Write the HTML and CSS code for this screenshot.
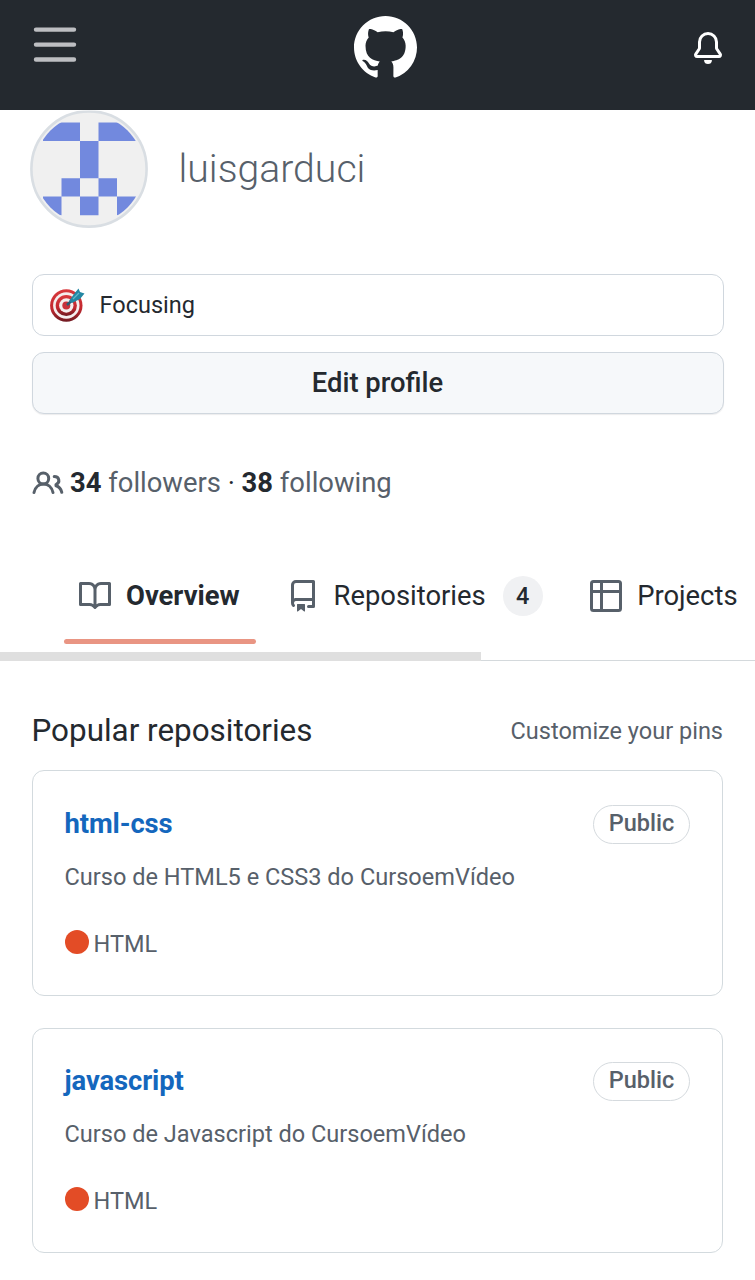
FILE: index.html
```
<!DOCTYPE html>
<html lang="en">
<head>
<meta charset="utf-8">
<title>luisgarduci</title>
<link rel="stylesheet" href="styles.css">
</head>
<body>
<header class="topbar">
  <svg class="menu" viewBox="0 0 42 36"><path d="M2 2.6H40M2 17.6H40M2 32.5H40"/></svg>
  <svg class="mark" viewBox="0 0 16 16"><path d="M8 0C3.58 0 0 3.58 0 8c0 3.54 2.29 6.53 5.47 7.59.4.07.55-.17.55-.38 0-.19-.01-.82-.01-1.49-2.01.37-2.53-.49-2.69-.94-.09-.23-.48-.94-.82-1.13-.28-.15-.68-.52-.01-.53.63-.01 1.08.58 1.23.82.72 1.21 1.87.87 2.33.66.07-.52.28-.87.51-1.07-1.78-.2-3.64-.89-3.64-3.95 0-.87.31-1.59.82-2.15-.08-.2-.36-1.02.08-2.12 0 0 .67-.21 2.2.82.64-.18 1.32-.27 2-.27.68 0 1.36.09 2 .27 1.53-1.04 2.2-.82 2.2-.82.44 1.1.16 1.92.08 2.12.51.56.82 1.27.82 2.15 0 3.07-1.87 3.75-3.65 3.95.29.25.54.73.54 1.48 0 1.07-.01 1.93-.01 2.2 0 .21.15.46.55.38A8.013 8.013 0 0016 8c0-4.42-3.58-8-8-8z"/></svg>
  <svg class="bell" viewBox="0 0 16 16"><path d="M8 16a2 2 0 001.985-1.75c.017-.137-.097-.25-.235-.25h-3.5c-.138 0-.252.113-.235.25A2 2 0 008 16z"/><path fill-rule="evenodd" d="M3 5a5 5 0 0110 0v2.947c0 .05.015.098.042.139l1.703 2.555A1.518 1.518 0 0113.482 13H2.518a1.518 1.518 0 01-1.263-2.36l1.703-2.554A.25.25 0 003 7.947V5zm5-3.5A3.5 3.5 0 004.5 5v2.947c0 .346-.102.683-.294.97l-1.703 2.556a.018.018 0 00-.003.01l.001.006c0 .002.002.004.004.006a.017.017 0 00.006.004l.007.001h10.964l.007-.001a.016.016 0 00.006-.004.016.016 0 00.004-.006l.001-.007a.017.017 0 00-.003-.01l-1.703-2.554a1.75 1.75 0 01-.294-.97V5A3.5 3.5 0 008 1.5z"/></svg>
</header>
<main>
  <section class="profile">
    <div class="identity">
      <svg class="avatar" viewBox="0 0 118 118">
        <defs><clipPath id="round"><circle cx="59" cy="59" r="54.500"/></clipPath></defs>
        <circle cx="59" cy="59" r="57.6" fill="#f0f0f0" stroke="#d9dee3" stroke-width="2.6"/>
        <path clip-path="url(#round)" fill="#7289de" d="M13 12.500H50V31H13zM68.500 12.500H106V31H68.500zM50 31H68.500V68.300H50zM31.500 68.300H50V86.600H31.500zM68.500 68.300H87V86.600H68.500zM13 86.600H31.500V105.300H13zM50 86.600H68.500V105.300H50zM87 86.600H106V105.300H87z"/>
      </svg>
      <h1 class="login">luisgarduci</h1>
    </div>
    <div class="status">
      <svg class="target" viewBox="0 0 34 34">
        <defs><linearGradient id="red" x1="0" y1="0" x2="0" y2="1"><stop offset="0" stop-color="#d9393d"/><stop offset=".6" stop-color="#c2282f"/><stop offset="1" stop-color="#701a22"/></linearGradient></defs>
        <circle cx="16.300" cy="17.500" r="16.200" fill="url(#red)"/>
        <circle cx="16.300" cy="17.500" r="13.200" fill="#f5eeee"/>
        <circle cx="16.300" cy="17.500" r="10.600" fill="url(#red)"/>
        <circle cx="16.300" cy="17.500" r="7.200" fill="#f5eeee"/>
        <circle cx="16.300" cy="17.500" r="4" fill="#c9303a"/>
        <path d="M17 17L29 6" stroke="#285b75" stroke-width="2.600"/>
        <path d="M19 13L24 6 28.500 .5 30 4 34.500 5.500 30 11 22 15z" fill="#2487a3"/>
        <path d="M23 11L29 5" stroke="#5db8cc" stroke-width="1.200"/>
      </svg>
      <span>Focusing</span>
    </div>
    <button class="edit">Edit profile</button>
    <p class="follow">
      <svg class="people" viewBox="0 0 32 32"><circle cx="11.300" cy="11.500" r="5.400"/><path d="M2 25.500C4.500 14.200 18.500 14.200 21 25.500M22.200 9.500C27.500 9.500 28.500 15.500 24 17.500V18.800C27.300 19.800 29 22 29.800 25.300"/></svg>
      <span><b>34</b> followers <i>·</i> <b>38</b> following</span>
    </p>
  </section>
  <nav class="tabs">
    <a class="tab active"><svg class="icon" viewBox="0 0 16 16"><path fill-rule="evenodd" d="M0 1.750A.75.75 0 01.75 1h4.253c1.227 0 2.317.59 3 1.501A3.744 3.744 0 0111.006 1h4.245a.75.75 0 01.75.75v10.500a.75.75 0 01-.75.75h-4.507a2.250 2.250 0 00-1.591.659l-.622.621a.75.75 0 01-1.060 0l-.622-.621A2.250 2.250 0 005.258 13H.75a.75.75 0 01-.75-.75V1.750zm8.755 3a2.250 2.250 0 012.250-2.250H14.500v9h-3.757c-.71 0-1.400.201-1.992.572l.004-7.322zm-1.504 7.324l.004-5.073-.002-2.253A2.250 2.250 0 005.003 2.500H1.500v9h3.757a3.750 3.750 0 011.994.574z"/></svg><span>Overview</span></a>
    <a class="tab repos"><svg class="icon" viewBox="0 0 16 16"><path fill-rule="evenodd" d="M2 2.500A2.500 2.500 0 014.500 0h8.750a.75.75 0 01.75.75v12.500a.75.75 0 01-.75.75h-2.500a.75.75 0 110-1.500h1.750v-2h-8a1 1 0 00-.714 1.700.75.75 0 01-1.072 1.050A2.495 2.495 0 012 11.500v-9zm10.500-1V9h-8c-.356 0-.694.074-1 .208V2.500a1 1 0 011-1h8zM5 12.250v3.250a.25.25 0 00.4.2l1.450-1.087a.25.25 0 01.3 0L8.600 15.700a.25.25 0 00.4-.2v-3.250a.25.25 0 00-.25-.25h-3.500a.25.25 0 00-.25.25z"/></svg><span>Repositories</span><span class="count">4</span></a>
    <a class="tab projects"><svg class="icon outline" viewBox="0 0 16 16"><rect x=".75" y=".75" width="14.500" height="14.500" rx="1"/><path d="M.75 5.750H15.250M5.750 .75V15.250"/></svg><span>Projects</span></a>
  </nav>
  <div class="scroll"><div class="thumb"></div></div>
  <section class="popular">
    <div class="heading"><h2>Popular repositories</h2><a>Customize your pins</a></div>
    <article class="card">
      <div class="row"><a class="repo">html-css</a><span class="badge">Public</span></div>
      <p class="desc">Curso de HTML5 e CSS3 do CursoemVídeo</p>
      <p class="lang"><span class="dot"></span><span>HTML</span></p>
    </article>
    <article class="card">
      <div class="row"><a class="repo">javascript</a><span class="badge">Public</span></div>
      <p class="desc">Curso de Javascript do CursoemVídeo</p>
      <p class="lang"><span class="dot"></span><span>HTML</span></p>
    </article>
  </section>
</main>
</body>
</html>
```
FILE: styles.css
```
* { box-sizing: border-box; }
body { margin: 0; background: #fff; color: #24292f; font-family: Roboto, sans-serif; font-size: 27.4px; overflow: hidden; }
h1, h2, p { margin: 0; font-weight: 400; }
svg { display: block; flex: none; overflow: visible; }
span, a { white-space: nowrap; }
.topbar { height: 110px; background: #24292f; display: flex; justify-content: space-between; padding: 0 31px 0 34px; }
.menu { width: 42px; height: 36px; margin-top: 27px; fill: none; stroke: #bdbec2; stroke-width: 4.4; stroke-linecap: round; }
.mark { width: 63px; height: 63px; margin: 16px 0 0 2.500px; fill: #fff; }
.bell { width: 32px; height: 32px; margin-top: 32px; fill: #fff; }
.profile { padding: 0 32px 0 31.500px; }
.identity { display: flex; align-items: center; height: 118px; margin: -.5px 0 46px -1.500px; gap: 30.500px; }
.avatar { width: 118px; height: 118px; clip-path: inset(1px -2px -2px -2px); }
.login { font-size: 39.200px; font-weight: 300; color: #57606a; line-height: 46px; }
.status, .edit { width: 692px; height: 62px; border: 1.500px solid #d0d7de; border-radius: 12px; }
.status { display: flex; align-items: center; padding-left: 17px; gap: 16px; font-size: 23.500px; margin-top: 46px; }
.status span { padding-top: 1px; }
.target { width: 34px; height: 34px; }
.edit { display: block; margin-top: 16px; background: #f6f8fa; font: 500 27.400px Roboto, sans-serif; color: #24292f; padding: 0; box-shadow: 0 1px 1px #1b1f2414; }
.follow { display: flex; align-items: center; height: 40px; margin-top: 49px; color: #57606a; gap: 6.500px; }
.follow b { color: #24292f; font-weight: 700; }
.follow i { color: #24292f; font-style: normal; }
.people { width: 32px; height: 32px; fill: none; stroke: #57606a; stroke-width: 3; stroke-linecap: round; stroke-linejoin: round; }
.icon { width: 32px; height: 32px; fill: #57606a; }
.outline { fill: none; stroke: #57606a; stroke-width: 1.500; }
.tabs { display: flex; height: 83px; margin-top: 58px; padding-left: 63.500px; }
.tab { display: flex; align-items: center; height: 83px; padding: 0 16px 13px 15.500px; gap: 15px; }
.active { width: 192px; font-weight: 700; position: relative; }
.active::after { content: ""; position: absolute; left: 0; right: 0; bottom: 0; height: 5px; border-radius: 3px; background: #e99583; }
.repos { margin-left: 15.500px; }
.count { width: 40px; height: 40px; border-radius: 20px; background: #f0f1f3; font-size: 23.500px; font-weight: 500; line-height: 40px; text-align: center; margin-left: 2px; }
.projects { margin-left: 16px; }
.scroll { height: 17px; border-bottom: 1px solid #d4d9dc; padding-top: 8px; }
.thumb { height: 9px; width: 481px; background: #dfdfdf; }
.popular { padding: 48px 32px 0 31.500px; }
.heading { display: flex; justify-content: space-between; align-items: center; height: 44px; margin-bottom: 17.500px; }
.heading h2 { font-size: 31.400px; }
.heading a { font-size: 23.500px; color: #57606a; padding-top: 1px; }
.card { height: 225.500px; border: 1.500px solid #d3dade; border-radius: 12px; padding: 33.500px 32px 0; margin-bottom: 32px; color: #57606a; }
.row { display: flex; justify-content: space-between; align-items: center; height: 39px; }
.repo { color: #1467bd; font-weight: 700; letter-spacing: -.1px; margin-top: -1px; }
.badge { width: 97px; height: 39px; border: 1.500px solid #d5dade; border-radius: 20px; font-size: 23.500px; font-weight: 500; line-height: 35px; text-align: center; }
.desc { font-size: 23.560px; line-height: 36px; margin-top: 15px; }
.lang { display: flex; align-items: center; gap: 5px; height: 36px; font-size: 23.500px; margin-top: 30px; }
.lang span:last-child { padding-top: 2px; }
.dot { width: 24px; height: 24px; border-radius: 50%; background: #e34c26; margin-bottom: 2px; }
```
